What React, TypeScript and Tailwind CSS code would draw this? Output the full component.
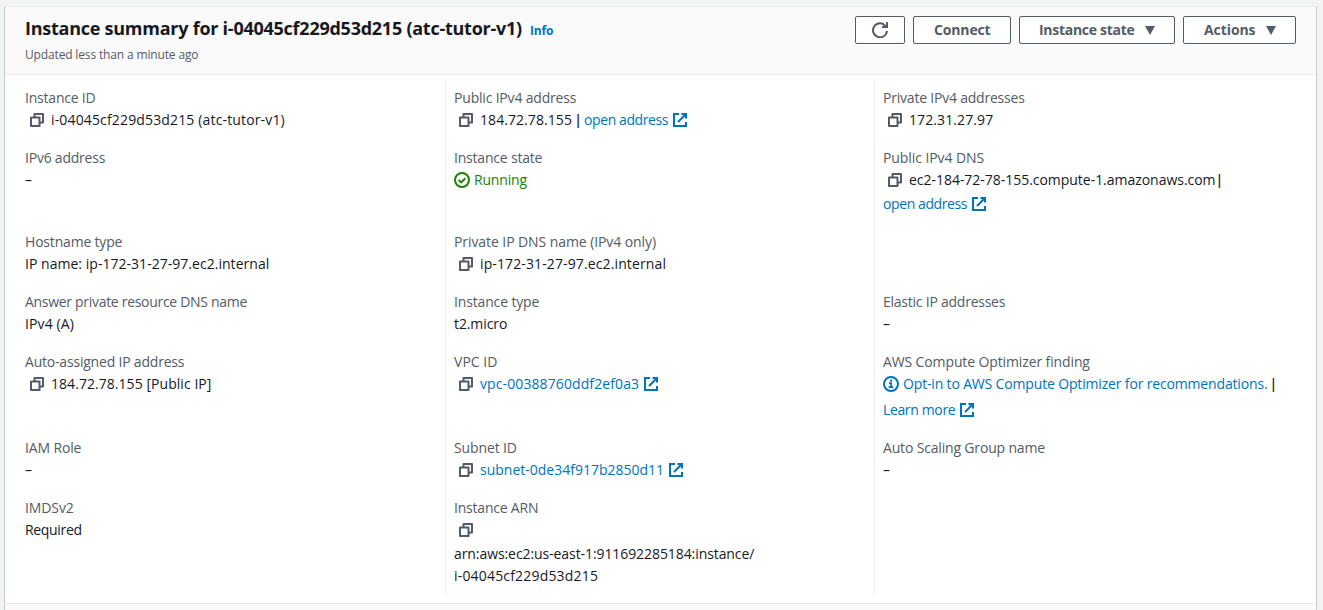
import React from "react";

function CopyIcon() {
  return (
    <svg className="ml-[5px] mr-[7px] shrink-0" width="14" height="14" viewBox="0 0 14 14" fill="none" stroke="#545b64" strokeWidth="2" strokeLinejoin="round">
      <path d="M1 4.5h8.5V13H1z" />
      <path d="M4.5 4.5V1H13v8.5H9.5" />
    </svg>
  );
}

function ExternalIcon({ className = "ml-[5px]" }: { className?: string }) {
  return (
    <svg className={`shrink-0 ${className}`} width="14" height="14" viewBox="0 0 14 14" fill="none" stroke="#0073bb" strokeWidth="2">
      <path d="M6 1H1v12h12V9" />
      <path d="M8.5 1H13v4.5M12.7 1.3L5 9" />
    </svg>
  );
}

function CheckIcon() {
  return (
    <svg className="mr-1 shrink-0" width="16" height="16" viewBox="0 0 16 16" fill="none" stroke="#1d8102" strokeWidth="2">
      <circle cx="8" cy="8" r="7" />
      <path d="M4.6 8l2.6 2.4 4.1-4.2" />
    </svg>
  );
}

function InfoIcon() {
  return (
    <svg className="mr-1 shrink-0" width="16" height="16" viewBox="0 0 16 16" fill="none" stroke="#0073bb" strokeWidth="2">
      <circle cx="8" cy="8" r="7" />
      <path d="M6 7.1h2.1V11M5.7 11.1h4.6" strokeWidth="1.7" />
      <path d="M7.1 4.6h2" />
    </svg>
  );
}

function RefreshIcon() {
  return (
    <svg width="16" height="16" viewBox="0 0 16 16" fill="none" stroke="#545b64" strokeWidth="2">
      <path d="M15 9a7 7 0 1 1-1.6-5.2L15 5" />
      <path d="M15.1 0v5H10" />
    </svg>
  );
}

function Caret({ className }: { className: string }) {
  return (
    <svg className={className} width="10" height="9" viewBox="0 0 10 9" fill="#545b64">
      <path d="M0 0h10L5 9z" />
    </svg>
  );
}

function Label({ t, children }: { t: string; children: React.ReactNode }) {
  return <div className={`h-[22px] whitespace-nowrap text-[#545b64] ${t}`}>{children}</div>;
}

function Line({ children }: { children: React.ReactNode }) {
  return <div className="flex h-[22px] items-center whitespace-nowrap">{children}</div>;
}

function Text({ t, children }: { t: string; children: React.ReactNode }) {
  return <span className={t}>{children}</span>;
}

function Link({ t, children }: { t: string; children: React.ReactNode }) {
  return <a className={`text-[#0073bb] ${t}`}>{children}</a>;
}

function Cell({ first, children }: { first?: boolean; children?: React.ReactNode }) {
  return <div className={first ? "py-2 pl-5" : "border-l border-[#eaeded] py-2 pl-2"}>{children}</div>;
}

const button =
  "flex h-7 items-center rounded-[2px] border border-[#545b64] bg-white text-sm font-bold text-[#545b64]";

export default function App() {
  return (
    <div className="flex h-[610px] flex-col overflow-hidden bg-[#f2f3f3] px-1 pt-1.5 font-['Open_Sans','Noto_Sans',sans-serif] text-sm leading-[22px] text-[#16191f]">
      <main className="mr-[2px] flex flex-1 flex-col border-x border-t border-l-[#c3cacc] border-r-[#c3cacc] border-t-[#eaeded] bg-white">
        <header className="flex h-[68px] shrink-0 justify-between border-b border-[#eaeded] bg-[#fafafa] pl-5 pr-5">
          <div className="pt-[10px]">
            <div className="flex items-baseline whitespace-nowrap">
              <h1 className="text-lg font-bold leading-[22px] tracking-[-0.25px]">
                Instance summary for i-04045cf229d53d215 (atc-tutor-v1)
              </h1>
              <a className="ml-2 text-xs font-bold tracking-[-0.11px] text-[#0073bb]">Info</a>
            </div>
            <p className="mt-[5px] text-xs leading-[22px] tracking-[-0.15px] text-[#545b64]">Updated less than a minute ago</p>
          </div>
          <div className="flex gap-2 pt-[9px]">
            <button className={`${button} w-[50px] justify-center`}>
              <RefreshIcon />
            </button>
            <button className={`${button} w-[98px] pl-5 tracking-[-0.15px]`}>Connect</button>
            <button className={`${button} w-[156px] whitespace-nowrap pl-[19px] tracking-[-0.28px]`}>
              Instance state
              <Caret className="ml-[10px]" />
            </button>
            <button className={`${button} w-[113px] pl-5 tracking-[-0.08px]`}>
              Actions
              <Caret className="ml-[11px]" />
            </button>
          </div>
        </header>

        <section className="mt-1 grid grid-cols-[440px_429px_1fr] grid-rows-[60px_84px_60px_60px_86px_60px_106px]">
          <Cell first>
            <Label t="tracking-[-0.21px]">Instance ID</Label>
            <Line><CopyIcon /><Text t="tracking-[0.15px]">i-04045cf229d53d215 (atc-tutor-v1)</Text></Line>
          </Cell>
          <Cell>
            <Label t="tracking-[-0.19px]">Public IPv4 address</Label>
            <Line>
              <CopyIcon />
              <Text t="tracking-[0.07px]">184.72.78.155</Text>
              <span className="w-3 text-center font-semibold">|</span>
              <Link t="tracking-[-0.4px]">open address</Link>
              <ExternalIcon />
            </Line>
          </Cell>
          <Cell>
            <Label t="tracking-[-0.21px]">Private IPv4 addresses</Label>
            <Line><CopyIcon /><Text t="tracking-[0.1px]">172.31.27.97</Text></Line>
          </Cell>

          <Cell first>
            <Label t="tracking-[-0.22px]">IPv6 address</Label>
            <Line>–</Line>
          </Cell>
          <Cell>
            <Label t="tracking-[-0.2px]">Instance state</Label>
            <Line><CheckIcon /><span className="tracking-[-0.18px] text-[#1d8102]">Running</span></Line>
          </Cell>
          <Cell>
            <Label t="tracking-[-0.08px]">Public IPv4 DNS</Label>
            <Line>
              <CopyIcon />
              <Text t="tracking-[-0.03px]">ec2-184-72-78-155.compute-1.amazonaws.com</Text>
              <span className="font-semibold">|</span>
            </Line>
            <div className="pt-0.5">
              <Line><Link t="tracking-[-0.4px]">open address</Link><ExternalIcon /></Line>
            </div>
          </Cell>

          <Cell first>
            <Label t="tracking-[-0.19px]">Hostname type</Label>
            <Line><Text t="tracking-[0.03px]">IP name: ip-172-31-27-97.ec2.internal</Text></Line>
          </Cell>
          <Cell>
            <Label t="tracking-[-0.08px]">Private IP DNS name (IPv4 only)</Label>
            <Line><CopyIcon /><Text t="tracking-[0.12px]">ip-172-31-27-97.ec2.internal</Text></Line>
          </Cell>
          <Cell />

          <Cell first>
            <Label t="tracking-[-0.3px]">Answer private resource DNS name</Label>
            <Line><Text t="tracking-[0.1px]">IPv4 (A)</Text></Line>
          </Cell>
          <Cell>
            <Label t="tracking-[-0.15px]">Instance type</Label>
            <Line><Text t="tracking-[-0.1px]">t2.micro</Text></Line>
          </Cell>
          <Cell>
            <Label t="tracking-[-0.24px]">Elastic IP addresses</Label>
            <Line>–</Line>
          </Cell>

          <Cell first>
            <Label t="tracking-[-0.2px]">Auto-assigned IP address</Label>
            <Line><CopyIcon /><Text t="tracking-[0.05px]">184.72.78.155 [Public IP]</Text></Line>
          </Cell>
          <Cell>
            <Label t="tracking-[0.03px]">VPC ID</Label>
            <Line><CopyIcon /><Link t="tracking-[0.1px]">vpc-00388760ddf2ef0a3</Link><ExternalIcon className="ml-[4.5px]" /></Line>
          </Cell>
          <Cell>
            <Label t="tracking-[-0.12px]">AWS Compute Optimizer finding</Label>
            <Line>
              <InfoIcon />
              <Link t="tracking-[-0.16px]">Opt-in to AWS Compute Optimizer for recommendations.</Link>
              <span className="w-3 text-center font-semibold">|</span>
            </Line>
            <div className="pt-1">
              <Line><Link t="tracking-[-0.36px]">Learn more</Link><ExternalIcon /></Line>
            </div>
          </Cell>

          <Cell first>
            <Label t="tracking-[-0.14px]">IAM Role</Label>
            <Line>–</Line>
          </Cell>
          <Cell>
            <Label t="tracking-[-0.13px]">Subnet ID</Label>
            <Line><CopyIcon /><Link t="tracking-[0px]">subnet-0de34f917b2850d11</Link><ExternalIcon className="ml-[4.5px]" /></Line>
          </Cell>
          <Cell>
            <Label t="tracking-[-0.17px]">Auto Scaling Group name</Label>
            <Line>–</Line>
          </Cell>

          <Cell first>
            <Label t="tracking-[-0.1px]">IMDSv2</Label>
            <Line><Text t="tracking-[-0.33px]">Required</Text></Line>
          </Cell>
          <Cell>
            <Label t="tracking-[-0.21px]">Instance ARN</Label>
            <Line><CopyIcon /></Line>
            <div className="pt-0.5">
              <Line><Text t="tracking-[-0.08px]">arn:aws:ec2:us-east-1:911692285184:instance/</Text></Line>
              <Line><Text t="tracking-[0.18px]">i-04045cf229d53d215</Text></Line>
            </div>
          </Cell>
          <Cell />
        </section>

        <footer className="mt-2 flex-1 border-t border-[#eaeded] bg-[#fafafa]" />
      </main>
    </div>
  );
}
